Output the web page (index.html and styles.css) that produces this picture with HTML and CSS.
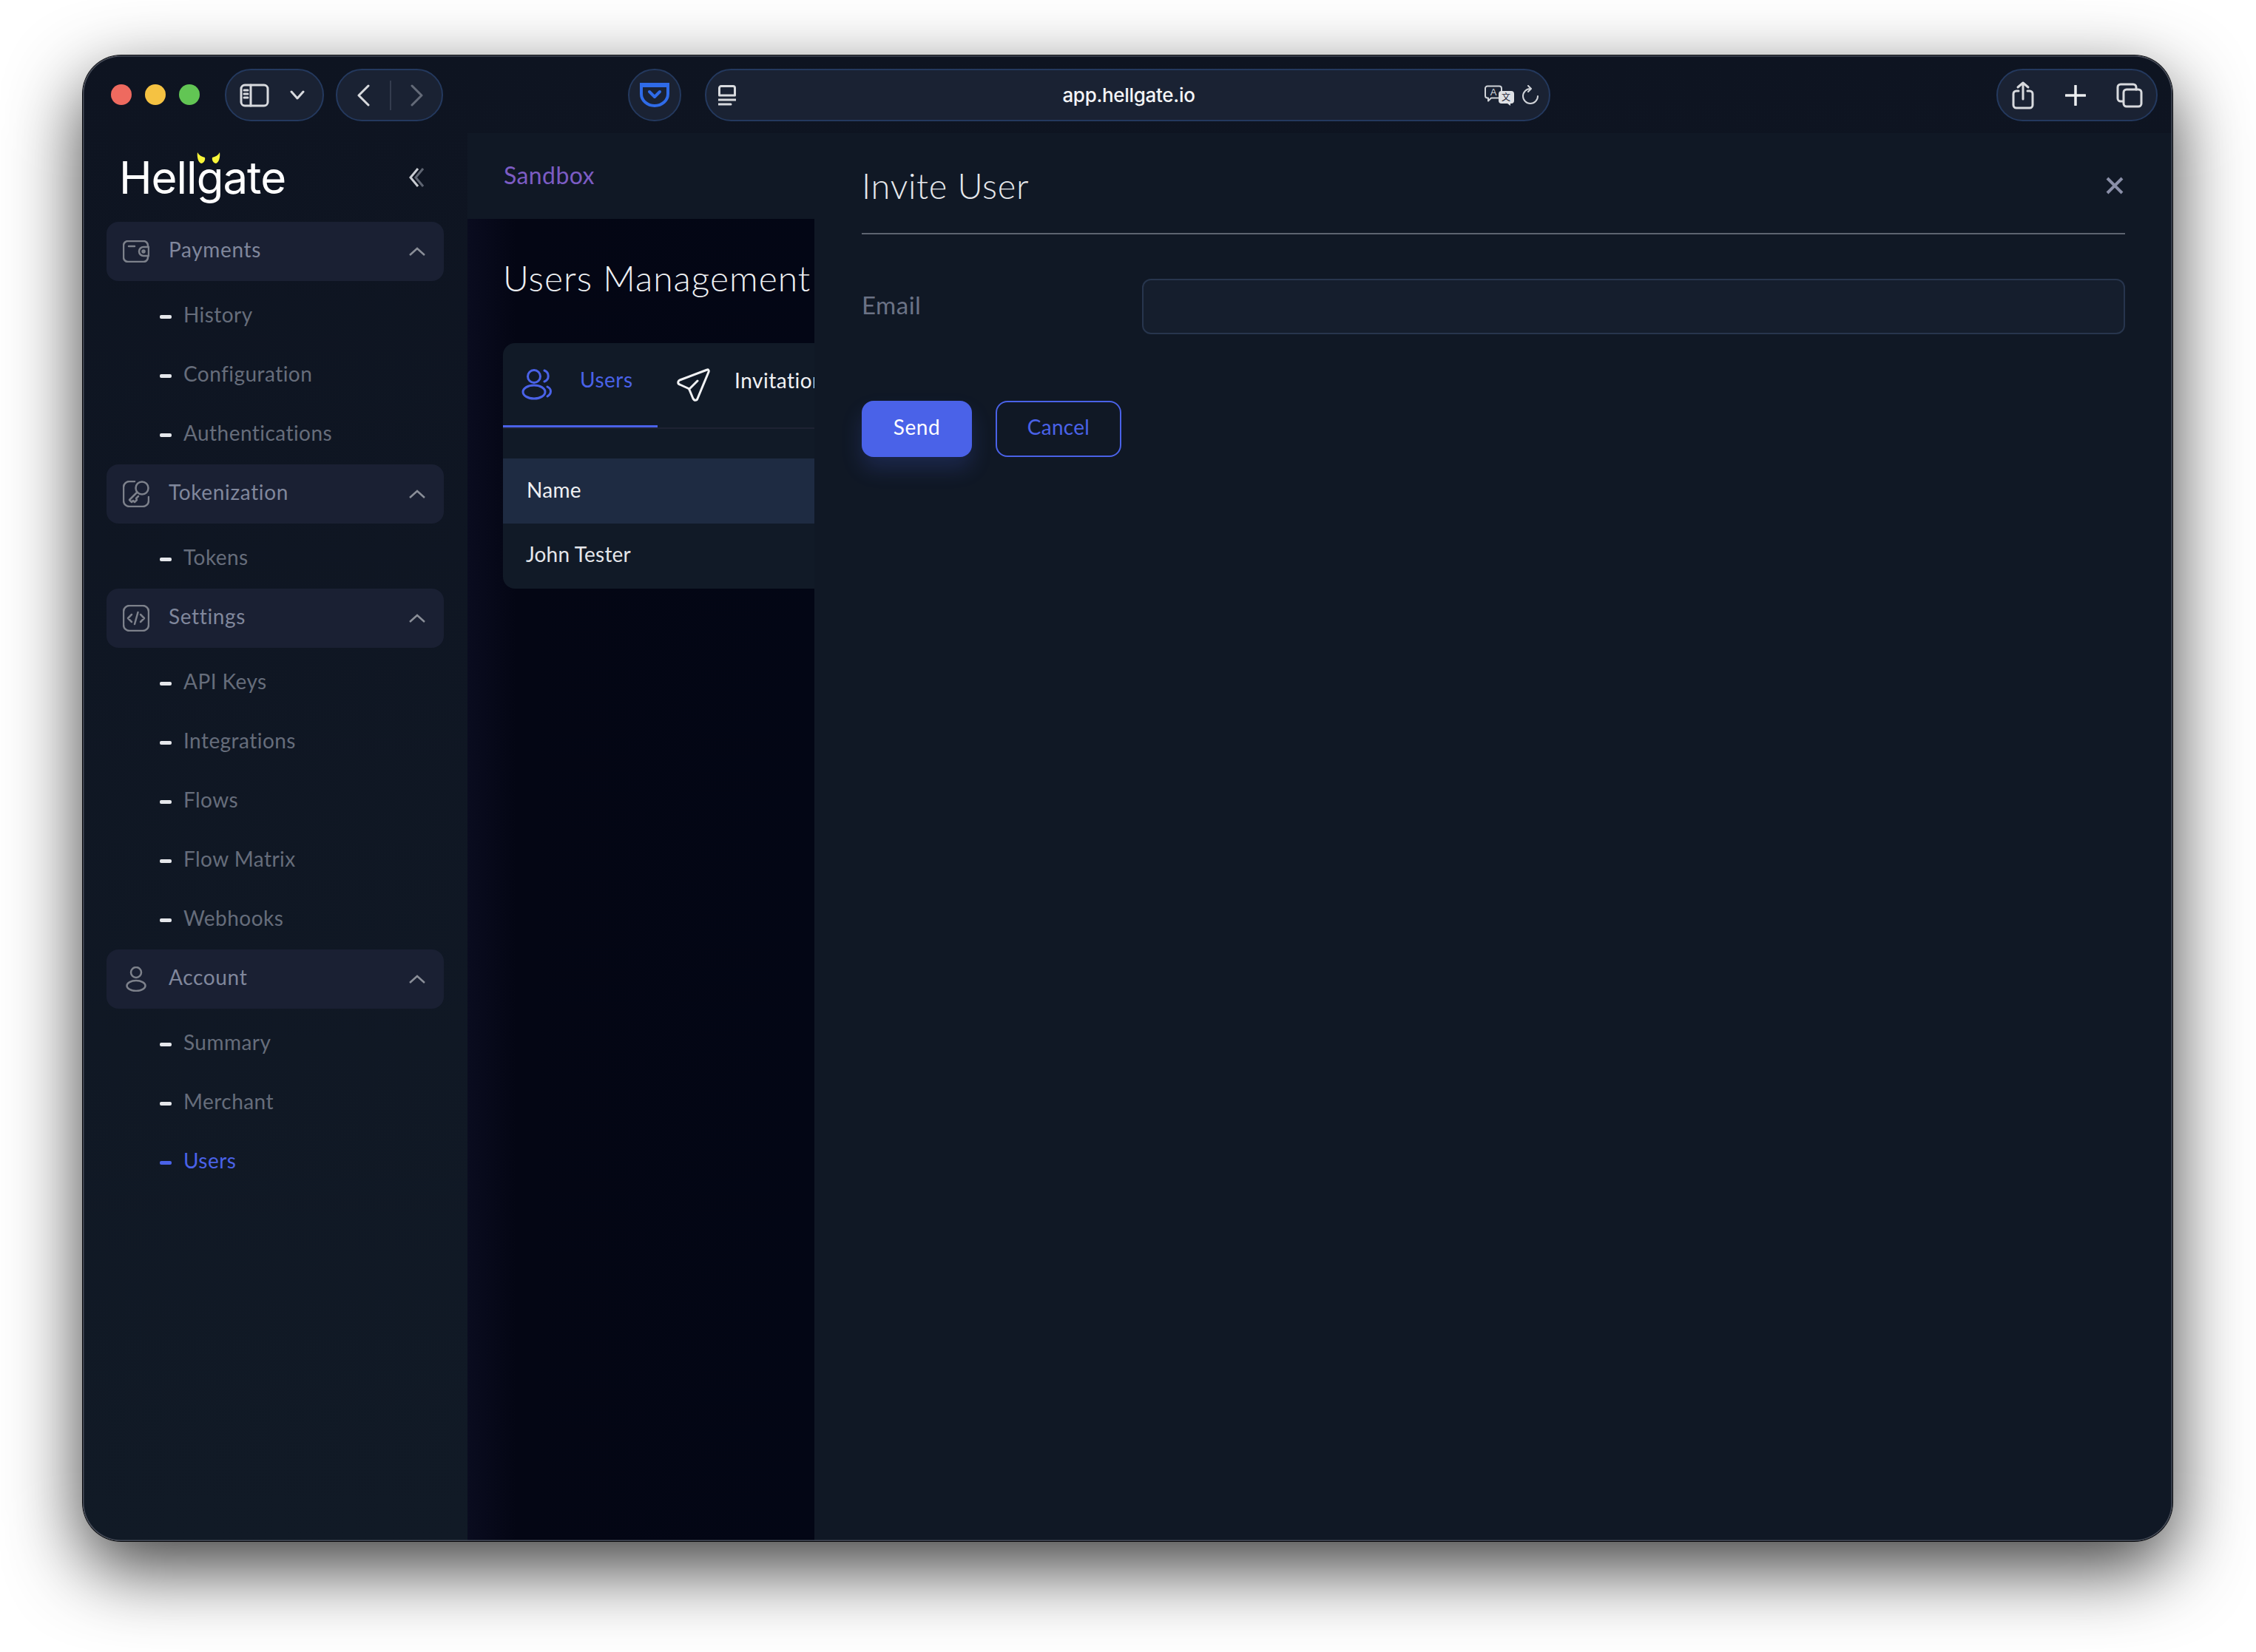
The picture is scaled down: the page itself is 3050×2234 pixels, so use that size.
FILE: index.html
```html
<!DOCTYPE html>
<html lang="en">
<head>
    <meta charset="UTF-8">
    <title>Hellgate - Invite User</title>
    <link rel="stylesheet" href="styles.css">
</head>
<body>
    <div class="window">
        <div class="toolbar">
            <div class="dots">
                <span class="dot red"></span>
                <span class="dot yellow"></span>
                <span class="dot green"></span>
            </div>
            <div class="pill pill-sidebar">
                <svg class="icon-light" width="40" height="32" viewBox="0 0 40 32"><rect x="2" y="2" width="36" height="28" rx="5"/><path d="M15 2v28M6 9h5M6 14h5M6 19h5"/></svg>
                <svg class="icon-light" width="20" height="13" viewBox="0 0 20 13"><path d="M2 2l8 9 8-9"/></svg>
            </div>
            <div class="pill pill-nav">
                <svg class="icon-light" width="18" height="30" viewBox="0 0 18 30"><path d="M16 2L3 15l13 13"/></svg>
                <span class="nav-line"></span>
                <svg class="icon-dim" width="18" height="30" viewBox="0 0 18 30"><path d="M2 2l13 13L2 28"/></svg>
            </div>
            <div class="pill pill-pocket">
                <svg class="icon-pocket" width="40" height="33" viewBox="0 0 40 33"><path class="pocket-top" d="M0 3h40"/><path d="M2 3v12a18 16 0 0 0 36 0V3M13 12l7 7 7-7"/></svg>
            </div>
            <div class="pill address">
                <svg class="icon-light addr-left" width="24" height="28" viewBox="0 0 24 28"><path d="M4 1.500h16a2.500 2.500 0 0 1 2.500 2.500v10h-21v-10a2.500 2.500 0 0 1 2.500-2.500zM0 20h24M0 26h17"/></svg>
                <span class="url">app.hellgate.io</span>
                <div class="addr-right">
                    <svg class="icon-thin" width="40" height="28" viewBox="0 0 40 28">
                        <path d="M4 1.500h16a3 3 0 0 1 3 3v10a3 3 0 0 1-3 3H9l-4 4v-4H4a3 3 0 0 1-3-3v-10a3 3 0 0 1 3-3z"/>
                        <text class="tr-a" x="12" y="14">A</text>
                        <path class="tr-fill" d="M23 8h13a4 4 0 0 1 4 4v9a4 4 0 0 1-4 4h-1v3l-4-3h-8a4 4 0 0 1-4-4v-9a4 4 0 0 1 4-4z"/>
                        <text class="tr-b" x="29" y="21">文</text>
                    </svg>
                    <svg class="icon-thin" width="24" height="27" viewBox="0 0 24 27"><path d="M12 5A10 10 0 1 0 22 15M9 1l4 4-4 4"/></svg>
                </div>
            </div>
            <div class="pill pill-actions">
                <svg class="icon-light" width="30" height="38" viewBox="0 0 30 38"><path d="M9 13H6a4 4 0 0 0-4 4v15a4 4 0 0 0 4 4h18a4 4 0 0 0 4-4V17a4 4 0 0 0-4-4h-3M15 24V2M8 8l7-6 7 6"/></svg>
                <svg class="icon-plus" width="28" height="28" viewBox="0 0 28 28"><path d="M14 1v26M1 14h26"/></svg>
                <svg class="icon-light" width="36" height="34" viewBox="0 0 36 34"><path d="M9 25H6a4 4 0 0 1-4-4V6a4 4 0 0 1 4-4h17a4 4 0 0 1 4 4v3"/><rect x="10" y="9" width="24" height="23" rx="4"/></svg>
            </div>
        </div>

        <div class="app">
            <aside class="sidebar">
                <div class="logo-row">
                    <span class="logo">Hellgate
                        <svg class="horns" width="32" height="16" viewBox="0 0 32 16"><path d="M1 0c2 4 6 6 10 7 1 4-2 8-5 8-4-1-6-9-5-15zM31 0c-2 4-6 6-10 7-1 4 2 8 5 8 4-1 6-9 5-15z"/></svg>
                    </span>
                    <svg class="collapse" width="20" height="26" viewBox="0 0 20 26"><path class="collapse-a" d="M12 1L2 13l10 12"/><path class="collapse-b" d="M19 1L9 13l10 12"/></svg>
                </div>

                <div class="menu-head">
                    <svg class="menu-icon" width="36" height="30" viewBox="0 0 36 30"><path d="M34 8V7a6 6 0 0 0-6-6H7a6 6 0 0 0-6 6v16a6 6 0 0 0 6 6h21a6 6 0 0 0 6-6v-1"/><path d="M8 8h8"/><path d="M35 9h-7a6 6 0 0 0 0 12h7z"/><circle cx="28" cy="15" r="1.500"/></svg>
                    <span class="menu-label">Payments</span>
                    <svg class="chevron" width="22" height="12" viewBox="0 0 22 12"><path d="M1 11l10-9 10 9"/></svg>
                </div>
                <ul class="submenu">
                    <li>History</li>
                    <li>Configuration</li>
                    <li>Authentications</li>
                </ul>

                <div class="menu-head">
                    <svg class="menu-icon" width="36" height="36" viewBox="0 0 36 36"><path d="M16 1H9a8 8 0 0 0-8 8v18a8 8 0 0 0 8 8h18a8 8 0 0 0 8-8v-5"/><circle cx="26" cy="10" r="8.500"/><path d="M19.500 15.500L9 26l3 3 2-2 2 2 3-3-1-2 3-3"/></svg>
                    <span class="menu-label">Tokenization</span>
                    <svg class="chevron" width="22" height="12" viewBox="0 0 22 12"><path d="M1 11l10-9 10 9"/></svg>
                </div>
                <ul class="submenu">
                    <li>Tokens</li>
                </ul>

                <div class="menu-head">
                    <svg class="menu-icon" width="36" height="36" viewBox="0 0 36 36"><rect x="1" y="1" width="34" height="34" rx="8"/><path d="M12 13l-5 5 5 5M24 13l5 5-5 5M20.500 10l-4.500 16"/></svg>
                    <span class="menu-label">Settings</span>
                    <svg class="chevron" width="22" height="12" viewBox="0 0 22 12"><path d="M1 11l10-9 10 9"/></svg>
                </div>
                <ul class="submenu">
                    <li>API Keys</li>
                    <li>Integrations</li>
                    <li>Flows</li>
                    <li>Flow Matrix</li>
                    <li>Webhooks</li>
                </ul>

                <div class="menu-head">
                    <svg class="menu-icon" width="36" height="34" viewBox="0 0 36 34"><circle cx="18" cy="8" r="7"/><ellipse cx="18" cy="26" rx="12.500" ry="7"/></svg>
                    <span class="menu-label">Account</span>
                    <svg class="chevron" width="22" height="12" viewBox="0 0 22 12"><path d="M1 11l10-9 10 9"/></svg>
                </div>
                <ul class="submenu">
                    <li>Summary</li>
                    <li>Merchant</li>
                    <li class="active">Users</li>
                </ul>
            </aside>

            <main class="main">
                <div class="env-bar">Sandbox</div>
                <div class="main-body">
                    <h1 class="page-title">Users Management</h1>
                    <div class="card">
                        <div class="tabs">
                            <div class="tab tab-active">
                                <svg class="tab-icon" width="42" height="42" viewBox="0 0 42 42"><circle cx="17" cy="10" r="8.500"/><path d="M31 2a8 8 0 0 1 0 15"/><ellipse cx="17" cy="31" rx="15" ry="9"/><path d="M35 24c6 3 6 9 0 13"/></svg>
                                <span>Users</span>
                            </div>
                            <div class="tab tab-invites">
                                <svg class="tab-icon" width="46" height="46" viewBox="0 0 46 46"><path d="M42 2L5 16c-3 1.500-3 5 0 6l11 5c1 .5 1.500 1 2 2l5 12c1.500 3 5 3 6 0L44 5c.7-2-.5-3.700-2-3zM18 28l11-11"/></svg>
                                <span>Invitations</span>
                            </div>
                        </div>
                        <div class="table-head">Name</div>
                        <div class="table-row">John Tester</div>
                    </div>
                </div>
            </main>

            <section class="drawer">
                <div class="drawer-head">
                    <h2 class="drawer-title">Invite User</h2>
                    <svg class="close" width="24" height="24" viewBox="0 0 24 24"><path d="M2 2l20 20M22 2L2 22"/></svg>
                </div>
                <form class="invite-form">
                    <div class="form-group">
                        <label for="email">Email</label>
                        <input type="email" id="email" name="email">
                    </div>
                    <div class="form-actions">
                        <button type="submit" class="btn btn-send">Send</button>
                        <button type="button" class="btn btn-cancel">Cancel</button>
                    </div>
                </form>
            </section>
        </div>
    </div>
</body>
</html>
```

FILE: styles.css
```css
body {
    margin: 0;
    height: 2234px;
    box-sizing: border-box;
    padding: 75px 113px 0 112px;
    background-color: #fff;
    font-family: Lato, "Open Sans", sans-serif;
    overflow: hidden;
}
.window {
    position: relative;
    display: flex;
    flex-direction: column;
    height: 2009px;
    border-radius: 52px;
    overflow: hidden;
    background: linear-gradient(#0e1421, #111a26);
}
body::before {
    content: "";
    position: absolute;
    left: 112px;
    top: 75px;
    width: 2825px;
    height: 2009px;
    border-radius: 52px;
    box-shadow: 0 36px 100px rgba(0, 0, 0, 0.76), 0 0 0 1px #05070c;
}
.window::after {
    content: "";
    position: absolute;
    inset: 0;
    border-radius: 52px;
    box-shadow: inset 0 0 0 1.5px #474c59;
    pointer-events: none;
}

/* browser toolbar */
.toolbar {
    display: flex;
    align-items: center;
    height: 105px;
    flex-shrink: 0;
    padding-left: 38px;
    box-sizing: border-box;
}
.dots {
    display: flex;
    gap: 18px;
}
.dot {
    width: 28px;
    height: 28px;
    border-radius: 50%;
}
.red { background-color: #ee6a5f; }
.yellow { background-color: #f5c242; }
.green { background-color: #62c554; }
.pill {
    display: flex;
    align-items: center;
    height: 71px;
    box-sizing: border-box;
    border: 2px solid #24395e;
    border-radius: 36px;
    background-color: #1a2233;
    margin-top: 2px;
}
.pill-sidebar {
    width: 134px;
    margin-left: 34px;
    padding: 0 24px 0 18px;
    justify-content: space-between;
}
.pill-nav {
    width: 145px;
    margin-left: 16px;
    padding: 0 24px 0 26px;
    justify-content: space-between;
}
.nav-line {
    width: 2px;
    height: 40px;
    background-color: #343c4e;
}
.pill-pocket {
    width: 72px;
    margin-left: 250px;
    justify-content: center;
}
.address {
    display: grid;
    grid-template-columns: 1fr auto 1fr;
    width: 1143px;
    margin-left: 32px;
    padding: 0 13px 0 16px;
}
.url {
    font-family: Inter, sans-serif;
    font-size: 26px;
    font-weight: 500;
    letter-spacing: -0.3px;
    color: #f4f5f7;
}
.addr-right {
    display: flex;
    justify-content: flex-end;
    align-items: center;
    gap: 10px;
}
.pill-actions {
    width: 218px;
    margin-left: auto;
    margin-right: 20px;
    padding: 0 18px 0 19px;
    justify-content: space-between;
}
.icon-light, .icon-dim, .icon-plus, .icon-pocket, .icon-thin {
    fill: none;
    stroke-linecap: round;
    stroke-linejoin: round;
}
.icon-light {
    stroke: #d8dade;
    stroke-width: 3;
}
.icon-dim {
    stroke: #636a78;
    stroke-width: 3;
}
.icon-plus {
    stroke: #eceef0;
    stroke-width: 3.5;
}
.icon-pocket {
    stroke: #2f6be8;
    stroke-width: 4;
}
.pocket-top {
    stroke-width: 6;
    stroke-linecap: butt;
}
.icon-thin {
    stroke: #d0d3d8;
    stroke-width: 2;
}
.tr-a {
    fill: #d0d3d8;
    stroke: none;
    font-family: "Liberation Sans", sans-serif;
    font-size: 13px;
    text-anchor: middle;
}
.tr-fill {
    fill: #dfe1e5;
    stroke: none;
}
.tr-b {
    fill: #1a2233;
    stroke: none;
    font-family: "Noto Sans CJK SC", sans-serif;
    font-size: 12px;
    text-anchor: middle;
}

/* app layout */
.app {
    display: flex;
    flex: 1;
    min-height: 0;
}
.sidebar {
    width: 520px;
    flex-shrink: 0;
    box-sizing: border-box;
    padding: 0 32px;
}
.logo-row {
    display: flex;
    align-items: center;
    justify-content: space-between;
    height: 120px;
    padding: 0 27px 0 17px;
}
.logo {
    position: relative;
    font-family: Inter, sans-serif;
    font-size: 60px;
    font-weight: 400;
    letter-spacing: -1px;
    line-height: 70px;
    color: #fff;
}
.horns {
    position: absolute;
    left: 105px;
    top: 1px;
    fill: #f8f53a;
}
.collapse {
    fill: none;
    stroke-width: 3;
}
.collapse-a { stroke: #c9ccd2; }
.collapse-b { stroke: #5e6471; }
.menu-head {
    display: flex;
    align-items: center;
    height: 80px;
    padding: 0 25px 0 22px;
    border-radius: 16px;
    background-color: #1a2033;
}
.menu-icon {
    flex-shrink: 0;
    fill: none;
    stroke: #7d818b;
    stroke-width: 2.5;
    stroke-linecap: round;
    stroke-linejoin: round;
}
.menu-label {
    flex: 1;
    margin: 0 0 6px 26px;
    font-size: 28px;
    letter-spacing: 0.65px;
    color: #80879c;
}
.chevron {
    fill: none;
    stroke: #8a8e98;
    stroke-width: 2.5;
}
.submenu {
    list-style: none;
    margin: 6px 0 2px;
    padding: 0;
}
.submenu li {
    display: flex;
    align-items: center;
    gap: 16px;
    height: 80px;
    box-sizing: border-box;
    padding: 0 0 2px 72px;
    font-size: 28px;
    letter-spacing: 0.45px;
    color: #666d7b;
}
.submenu li::before {
    content: "";
    width: 16px;
    height: 5px;
    margin-top: 6px;
    border-radius: 2px;
    background-color: #e5e7eb;
}
.submenu li.active {
    color: #4a62e8;
}
.submenu li.active::before {
    background-color: #4a62e8;
}

/* page behind the drawer */
.main {
    width: 469px;
    flex-shrink: 0;
    overflow: hidden;
    background: linear-gradient(90deg, #0a0c1f, #040614 14%, #030615);
}
.env-bar {
    display: flex;
    align-items: center;
    height: 116px;
    box-sizing: border-box;
    padding: 0 0 4px 49px;
    background-color: #101825;
    font-size: 32px;
    letter-spacing: 0.4px;
    color: #7c5cc4;
}
.main-body {
    width: 1100px;
    padding: 50px 0 0 48px;
}
.page-title {
    margin: 0 0 58px;
    font-size: 48px;
    font-weight: 300;
    letter-spacing: 1px;
    line-height: 60px;
    color: #eef0f3;
}
.card {
    width: 1000px;
    border-radius: 16px;
    overflow: hidden;
    background-color: #111a27;
}
.tabs {
    display: flex;
    height: 116px;
    margin-bottom: 40px;
    border-bottom: 2px solid #1e2233;
    box-sizing: border-box;
}
.tab {
    display: flex;
    align-items: center;
    gap: 37px;
    height: 114px;
    box-sizing: border-box;
    padding: 0 25px;
    font-size: 28px;
    letter-spacing: 0.5px;
    color: #f1f2f4;
}
.tab span {
    margin-bottom: 14px;
}
.tab-icon {
    fill: none;
    stroke: currentColor;
    stroke-width: 3;
    stroke-linecap: round;
    stroke-linejoin: round;
}
.tab-active {
    width: 209px;
    border-bottom: 3px solid #4a62e8;
    color: #4a62e8;
}
.tab-invites {
    gap: 33px;
}
.table-head {
    display: flex;
    align-items: center;
    height: 88px;
    box-sizing: border-box;
    padding: 0 0 4px 32px;
    background-color: #1e2b42;
    font-size: 28px;
    letter-spacing: 0.3px;
    color: #eef0f3;
}
.table-row {
    display: flex;
    align-items: center;
    height: 88px;
    box-sizing: border-box;
    padding: 0 0 6px 31px;
    font-size: 28px;
    letter-spacing: 0.2px;
    color: #e4e6ea;
}

/* invite drawer */
.drawer {
    flex: 1;
    box-sizing: border-box;
    padding: 0 64px;
    background-color: #101825;
}
.drawer-head {
    display: flex;
    align-items: center;
    justify-content: space-between;
    height: 137px;
    padding-top: 6px;
    box-sizing: border-box;
    border-bottom: 2px solid #5d6470;
}
.drawer-title {
    margin: 0;
    font-size: 47px;
    font-weight: 300;
    letter-spacing: 0.7px;
    color: #e6e8ec;
}
.close {
    margin-right: 2px;
    fill: none;
    stroke: #8a8fa8;
    stroke-width: 4;
}
.form-group {
    display: flex;
    align-items: center;
    margin-top: 60px;
}
.form-group label {
    width: 379px;
    box-sizing: border-box;
    padding-bottom: 6px;
    font-size: 33px;
    letter-spacing: 0.5px;
    color: #6b7285;
}
.form-group input {
    flex: 1;
    height: 75px;
    box-sizing: border-box;
    border: 2.5px solid #27354d;
    border-radius: 12px;
    background-color: #151e2d;
}
.form-actions {
    display: flex;
    gap: 32px;
    margin-top: 90px;
}
.btn {
    height: 76px;
    padding-bottom: 8px;
    border-radius: 16px;
    font-family: Lato, sans-serif;
    font-size: 28px;
    cursor: pointer;
}
.btn-send {
    width: 149px;
    border: none;
    background-color: #4a62e8;
    color: #fff;
    letter-spacing: 0.6px;
    box-shadow: 0 16px 28px rgba(74, 98, 232, 0.2);
}
.btn-cancel {
    width: 170px;
    border: 2.5px solid #4a62e8;
    background-color: transparent;
    color: #4a62e8;
    letter-spacing: 0.3px;
}
```
